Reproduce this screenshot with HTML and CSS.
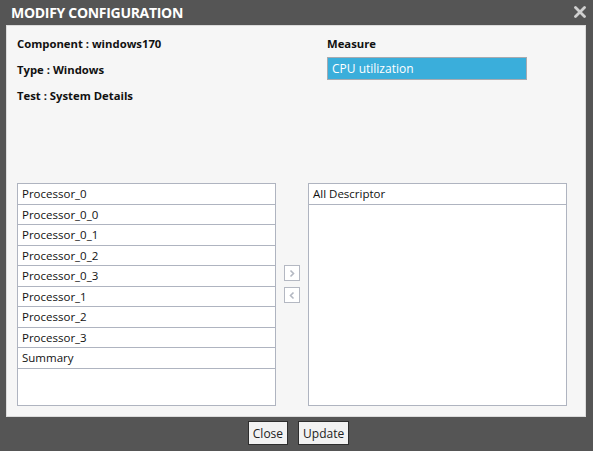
FILE: index.html
```html
<!DOCTYPE html>
<html>
<head>
<meta charset="utf-8">
<link rel="stylesheet" href="styles.css">
</head>
<body>
<div class="dialog">
  <div class="titlebar">
    <span class="title">MODIFY CONFIGURATION</span>
    <svg class="close-x" width="12" height="12" viewBox="0 0 12 12"><path d="M1.5 1.5 L10.5 10.5 M10.5 1.5 L1.5 10.5" stroke="#d0d0d0" stroke-width="2.8" stroke-linecap="round"/></svg>
  </div>
  <div class="panel">
    <div class="info">
      <div class="info-left">
        <div class="label">Component : windows170</div>
        <div class="label">Type : Windows</div>
        <div class="label">Test : System Details</div>
      </div>
      <div class="info-right">
        <div class="label">Measure</div>
        <div class="select">CPU utilization</div>
      </div>
    </div>
    <div class="lists">
      <div class="list">
        <div class="row">Processor_0</div>
        <div class="row">Processor_0_0</div>
        <div class="row">Processor_0_1</div>
        <div class="row">Processor_0_2</div>
        <div class="row">Processor_0_3</div>
        <div class="row">Processor_1</div>
        <div class="row">Processor_2</div>
        <div class="row">Processor_3</div>
        <div class="row">Summary</div>
      </div>
      <div class="arrows">
        <div class="arrow"><svg width="8" height="9" viewBox="0 0 8 9"><path d="M2.5 1.5 L5.5 4.5 L2.5 7.5" stroke="#b4b8c2" stroke-width="1.6" fill="none"/></svg></div>
        <div class="arrow"><svg width="8" height="9" viewBox="0 0 8 9"><path d="M5.5 1.5 L2.5 4.5 L5.5 7.5" stroke="#b4b8c2" stroke-width="1.6" fill="none"/></svg></div>
      </div>
      <div class="list">
        <div class="row">All Descriptor</div>
      </div>
    </div>
  </div>
  <div class="buttons">
    <button class="btn">Close</button>
    <button class="btn">Update</button>
  </div>
</div>
</body>
</html>
```
FILE: styles.css
```css
html, body {
  margin: 0;
  padding: 0;
}
body {
  background: #555555;
  width: 593px;
  height: 451px;
  overflow: hidden;
  font-family: "Open Sans", "DejaVu Sans", sans-serif;
}
.dialog {
  display: flex;
  flex-direction: column;
}
.titlebar {
  height: 25px;
  display: flex;
  align-items: center;
  justify-content: space-between;
  padding: 0 7px 0 11px;
}
.title {
  color: #ffffff;
  font-weight: 700;
  font-size: 14px;
  letter-spacing: -0.3px;
  margin-top: -1px;
}
.close-x {
  margin-top: -2px;
}
.panel {
  margin: 0 7px 0 6px;
  height: 390px;
  background: #f6f6f6;
  border: 1px solid #dcdcdc;
  padding: 0 0 0 10px;
  display: flex;
  flex-direction: column;
}
.info {
  height: 157px;
  display: flex;
  box-sizing: border-box;
  padding-top: 5px;
}
.info-left {
  width: 310px;
}
.label {
  font-size: 11.3px;
  font-weight: 700;
  line-height: 26px;
  color: #111;
}
.select {
  width: 194px;
  height: 21px;
  background: #3aaedb;
  border: 1px solid #a7aab0;
  color: #ffffff;
  font-size: 12px;
  line-height: 21px;
  padding-left: 4px;
}
.lists {
  display: flex;
  gap: 8px;
  height: 223px;
}
.list {
  width: 257px;
  height: 221px;
  background: #ffffff;
  border: 1px solid #afb4c0;
}
.row {
  height: 19.5px;
  border-bottom: 1px solid #afb4c0;
  font-size: 11.5px;
  line-height: 19.5px;
  padding-left: 4px;
  color: #111;
}
.arrows {
  width: 16px;
  padding-top: 82px;
  display: flex;
  flex-direction: column;
  gap: 6px;
}
.arrow {
  width: 14px;
  height: 14px;
  border: 1px solid #b4b8c2;
  background: #ffffff;
  display: flex;
  align-items: center;
  justify-content: center;
}
.buttons {
  display: flex;
  justify-content: center;
  gap: 10px;
  padding-top: 4px;
  padding-left: 4px;
}
.btn {
  height: 24px;
  padding: 0 4px;
  background: #f2f2f2;
  border: 1px solid #2e2e2e;
  border-radius: 0;
  font-family: "Open Sans", "DejaVu Sans", sans-serif;
  font-size: 12px;
  color: #222;
}
```
